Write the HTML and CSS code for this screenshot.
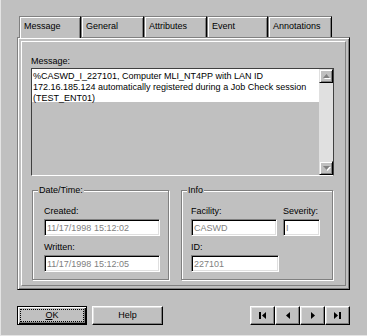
FILE: index.html
```html
<!DOCTYPE html>
<html lang="en">
<head>
    <meta charset="utf-8">
    <title>Event Properties</title>
    <link rel="stylesheet" href="styles.css">
</head>
<body>
    <div class="dialog">
        <div class="tabs">
            <div class="tab tab-message active">Message</div>
            <div class="tab tab-general">General</div>
            <div class="tab tab-attributes">Attributes</div>
            <div class="tab tab-event">Event</div>
            <div class="tab tab-annotations">Annotations</div>
        </div>
        <div class="panel">
            <div class="frame">
                <div class="label">Message:</div>
                <div class="memo">
                    <div class="memo-text">%CASWD_I_227101, Computer MLI_NT4PP with LAN ID<br>172.16.185.124 automatically registered during a Job Check session<br>(TEST_ENT01)</div>
                    <div class="scrollbar">
                        <div class="sb-btn">
                            <svg width="7" height="4" viewBox="0 0 7 4"><polygon points="3.5,0 7,4 0,4" fill="#808080"/></svg>
                        </div>
                        <div class="sb-track"></div>
                        <div class="sb-btn">
                            <svg width="7" height="4" viewBox="0 0 7 4"><polygon points="0,0 7,0 3.5,4" fill="#808080"/></svg>
                        </div>
                    </div>
                </div>
                <div class="groups">
                    <fieldset class="group group-date">
                        <legend>Date/Time:</legend>
                        <div class="label">Created:</div>
                        <div class="field field-date">11/17/1998 15:12:02</div>
                        <div class="label label-gap">Written:</div>
                        <div class="field field-date">11/17/1998 15:12:05</div>
                    </fieldset>
                    <fieldset class="group group-info">
                        <legend>Info</legend>
                        <div class="info-row">
                            <div>
                                <div class="label">Facility:</div>
                                <div class="field field-facility">CASWD</div>
                            </div>
                            <div>
                                <div class="label">Severity:</div>
                                <div class="field field-severity">I</div>
                            </div>
                        </div>
                        <div class="label label-gap">ID:</div>
                        <div class="field field-id">227101</div>
                    </fieldset>
                </div>
            </div>
        </div>
        <div class="footer">
            <button class="btn btn-default"><span class="focus"><u>O</u>K</span></button>
            <button class="btn btn-help">Help</button>
            <div class="nav">
                <button class="btn nav-btn">
                    <svg width="7" height="7" viewBox="0 0 7 7"><rect x="0" y="0" width="2" height="7" fill="#000"/><polygon points="7,0 3,3.5 7,7" fill="#000"/></svg>
                </button>
                <button class="btn nav-btn">
                    <svg width="4" height="7" viewBox="0 0 4 7"><polygon points="4,0 0,3.5 4,7" fill="#000"/></svg>
                </button>
                <button class="btn nav-btn">
                    <svg width="4" height="7" viewBox="0 0 4 7"><polygon points="0,0 4,3.5 0,7" fill="#000"/></svg>
                </button>
                <button class="btn nav-btn">
                    <svg width="7" height="7" viewBox="0 0 7 7"><polygon points="0,0 4,3.5 0,7" fill="#000"/><rect x="5" y="0" width="2" height="7" fill="#000"/></svg>
                </button>
            </div>
        </div>
    </div>
</body>
</html>
```

FILE: styles.css
```css
html,
body {
    margin: 0;
    padding: 0;
    background: #c0c0c0;
}

body {
    font-family: "Liberation Sans", Arial, sans-serif;
    font-size: 9px;
    line-height: 11px;
    color: #000;
}

.dialog {
    box-sizing: border-box;
    width: 367px;
    height: 336px;
    padding: 16px 17px 0 17px;
    border-left: 1px solid #e4e4e4;
    border-bottom: 1px solid #e4e4e4;
    padding-left: 16px;
}

/* tabs */

.tabs {
    display: flex;
    margin-left: 2px;
    height: 21px;
}

.tab {
    box-sizing: border-box;
    height: 21px;
    padding: 4px 0 0 4px;
    border: 1px solid;
    border-color: #808080 #000 transparent #808080;
    border-bottom: 0;
    box-shadow: inset 1px 1px 0 #fff, inset -1px 0 0 #808080;
}

.tab.active {
    position: relative;
    z-index: 1;
    height: 22px;
    margin-bottom: -1px;
    background: #c0c0c0;
}

.tab-message { width: 62px; }
.tab-general { width: 63px; }
.tab-attributes { width: 63px; }
.tab-event { width: 61px; }
.tab-annotations { width: 64px; }

/* tab panel */

.panel {
    box-sizing: border-box;
    width: 333px;
    height: 253px;
    padding: 3px;
    border: 1px solid;
    border-color: #808080 #000 #000 #808080;
    box-shadow: inset 1px 1px 0 #fff, inset -1px -1px 0 #808080;
}

.frame {
    box-sizing: border-box;
    height: 245px;
    padding: 14px 11px 0 9px;
    border: 1px solid;
    border-color: #fff #808080 #808080 #fff;
}

.label {
    height: 11px;
    white-space: nowrap;
}

.label-gap {
    margin-top: 6px;
}

/* message box */

.memo {
    box-sizing: border-box;
    display: flex;
    height: 108px;
    margin-top: 1px;
    border: 1px solid;
    border-color: #404040 #404040 #fff #404040;
    background: #c0c0c0;
}

.memo-text {
    flex: 1;
    align-self: flex-start;
    padding: 2px 0 0 1px;
    height: 31px;
    background: #fff;
    white-space: nowrap;
}

.scrollbar {
    display: flex;
    flex-direction: column;
    width: 14px;
}

.sb-btn {
    box-sizing: border-box;
    display: flex;
    align-items: center;
    justify-content: center;
    width: 14px;
    height: 14px;
    border: 1px solid;
    border-color: #dfdfdf #000 #000 #dfdfdf;
    box-shadow: inset 1px 1px 0 #fff, inset -1px -1px 0 #808080;
    background: #c0c0c0;
}

.sb-btn svg {
    filter: drop-shadow(1px 1px 0 #fff);
}

.sb-track {
    flex: 1;
    background: #e0e0e0;
}

/* group boxes */

.groups {
    display: flex;
    gap: 12px;
    margin-top: 9px;
    margin-left: 1px;
}

.group {
    box-sizing: border-box;
    margin: 0;
    min-width: 0;
    height: 95px;
    padding: 11px 8px 0 9px;
    border: 1px solid #808080;
    box-shadow: inset 1px 1px 0 #fff, 1px 1px 0 #fff;
}

.group legend {
    padding: 0 1px;
    line-height: 10px;
    background: #c0c0c0;
}

.group-date {
    width: 137px;
    padding-left: 11px;
}

.group-date legend {
    margin-left: -6px;
}

.group-info {
    width: 152px;
}

.group-info legend {
    margin-left: -4px;
}

.info-row {
    display: flex;
    gap: 6px;
}

.field {
    box-sizing: border-box;
    height: 17px;
    margin-top: 2px;
    padding: 3px 0 0 2px;
    border: 1px solid;
    border-color: #808080 #fff #fff #808080;
    box-shadow: inset 1px 1px 0 #000, inset -1px -1px 0 #dfdfdf;
    background: #fff;
    color: #808080;
    white-space: nowrap;
    overflow: hidden;
}

.field-date {
    width: 116px;
}

.field-facility {
    width: 86px;
}

.field-severity {
    width: 37px;
}

.field-id {
    width: 88px;
}

/* buttons */

.footer {
    display: flex;
    margin-top: 16px;
}

.btn {
    box-sizing: border-box;
    display: flex;
    align-items: center;
    justify-content: center;
    height: 19px;
    margin: 0;
    padding: 0;
    font: inherit;
    color: #000;
    background: #c0c0c0;
    border: 1px solid;
    border-color: #fff #000 #000 #fff;
    box-shadow: inset -1px -1px 0 #808080, inset 1px 1px 0 #dfdfdf;
}

.btn-default {
    width: 70px;
    padding: 2px;
    border-color: #000;
    box-shadow: inset 1px 1px 0 #fff, inset -1px -1px 0 #000, inset -2px -2px 0 #808080;
}

.btn-default .focus {
    flex: 1;
    align-self: stretch;
    display: flex;
    align-items: center;
    justify-content: center;
    outline: 1px dotted #000;
    outline-offset: -1px;
}

.btn-help {
    width: 71px;
    margin-left: 5px;
}

.nav {
    display: flex;
    margin-left: auto;
}

.nav-btn {
    width: 25px;
}
```
